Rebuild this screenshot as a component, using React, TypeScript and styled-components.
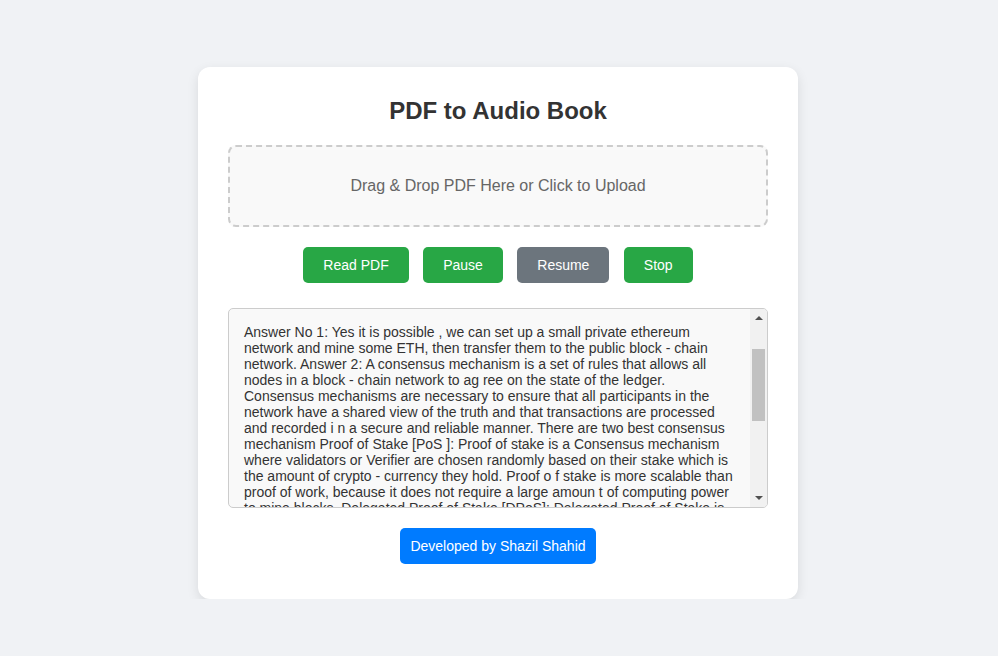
import styled, { createGlobalStyle } from "styled-components";

const GlobalStyle = createGlobalStyle`
  body {
    margin: 0;
    background: #f0f2f5;
    font-family: "Liberation Sans", Arial, sans-serif;
  }
`;

const Page = styled.div`
  display: flex;
  justify-content: center;
  padding: 67px 2px 0 0;
`;

const Card = styled.div`
  width: 600px;
  box-sizing: border-box;
  background: #fff;
  border-radius: 12px;
  padding: 30px 30px 35px;
  box-shadow: 0 4px 12px rgba(0, 0, 0, 0.1);
  text-align: center;
`;

const Title = styled.h1`
  margin: 0 0 20px;
  font-size: 24px;
  line-height: 28px;
  color: #333;
`;

const DropZone = styled.div`
  border: 2px dashed #ccc;
  border-radius: 8px;
  background: #f9f9f9;
  padding: 30px;
  font-size: 16px;
  line-height: 18px;
  color: #666;
  cursor: pointer;
`;

const Controls = styled.div`
  display: flex;
  justify-content: center;
  gap: 14.45px;
  margin-top: 20px;
`;

const tones = { green: "#28a745", grey: "#6c757d", blue: "#007bff" };

const Button = styled.button<{ $tone?: keyof typeof tones; $tight?: boolean }>`
  border: none;
  border-radius: 5px;
  padding: ${(p) => (p.$tight ? "10px" : "10px 20px")};
  font-family: inherit;
  font-size: 14px;
  line-height: 16px;
  color: #fff;
  cursor: pointer;
  background: ${(p) => tones[p.$tone ?? "green"]};
`;

const TextFrame = styled.div`
  position: relative;
  margin-top: 25px;
  border: 1px solid #ccc;
  border-radius: 5px;
  background: #f9f9f9;
  overflow: hidden;
`;

const TextBox = styled.textarea`
  display: block;
  width: 100%;
  height: 198px;
  box-sizing: border-box;
  padding: 15px 32px 15px 15px;
  border: none;
  outline: none;
  background: transparent;
  font-family: "Liberation Sans", Arial, sans-serif;
  font-size: 14px;
  line-height: 16px;
  color: #333;
  resize: none;
  overflow: hidden;
`;

// drawn scrollbar: the headless browser hides native ones
const ScrollBar = styled.div`
  position: absolute;
  top: 0;
  right: 0;
  bottom: 0;
  width: 17px;
  background: #f1f1f1;
  display: flex;
  flex-direction: column;
  align-items: center;
`;

const ArrowButton = styled.div`
  height: 17px;
  width: 17px;
  display: flex;
  align-items: center;
  justify-content: center;
`;

const Track = styled.div`
  flex: 1;
  width: 100%;
  padding-top: 23px;
  box-sizing: border-box;
`;

const Thumb = styled.div`
  height: 72px;
  margin: 0 2px;
  background: #c1c1c1;
`;

const Arrow = ({ up }: { up?: boolean }) => (
  <svg width="8" height="5" viewBox="0 0 8 5">
    <polygon points={up ? "0,5 4,1 8,5" : "0,0 8,0 4,4"} fill="#505050" />
  </svg>
);

const Footer = styled.div`
  margin-top: 20px;
`;

const text =
  "Answer No 1: Yes it is possible , we can set up a small private ethereum network and mine some ETH, then transfer them to the public block - chain network. Answer 2: A consensus mechanism is a set of rules that allows all nodes in a block - chain network to ag ree on the state of the ledger. Consensus mechanisms are necessary to ensure that all participants in the network have a shared view of the truth and that transactions are processed and recorded i n a secure and reliable manner. There are two best consensus mechanism Proof of Stake [PoS ]: Proof of stake is a Consensus mechanism where validators or Verifier are chosen randomly based on their stake which is the amount of crypto - currency they hold. Proof o f stake is more scalable than proof of work, because it does not require a large amoun t of computing power to mine blocks. Delegated Proof of Stake [DPoS]: Delegated Proof of Stake is a variation of Proof of Stake in which token holders vote for a small number of delegates who validate transactions and produce blocks on their behalf. This makes DPoS faster and more efficient than other mechanisms, since only a limited number of nodes take part in reaching consensus.";

export default function App() {
  return (
    <>
      <GlobalStyle />
      <Page>
        <Card>
          <Title>PDF to Audio Book</Title>
          <DropZone>Drag &amp; Drop PDF Here or Click to Upload</DropZone>
          <Controls>
            <Button>Read PDF</Button>
            <Button>Pause</Button>
            <Button $tone="grey">Resume</Button>
            <Button>Stop</Button>
          </Controls>
          <TextFrame>
            <TextBox defaultValue={text} readOnly />
            <ScrollBar>
              <ArrowButton>
                <Arrow up />
              </ArrowButton>
              <Track>
                <Thumb />
              </Track>
              <ArrowButton>
                <Arrow />
              </ArrowButton>
            </ScrollBar>
          </TextFrame>
          <Footer>
            <Button $tone="blue" $tight>
              Developed by Shazil Shahid
            </Button>
          </Footer>
        </Card>
      </Page>
    </>
  );
}
